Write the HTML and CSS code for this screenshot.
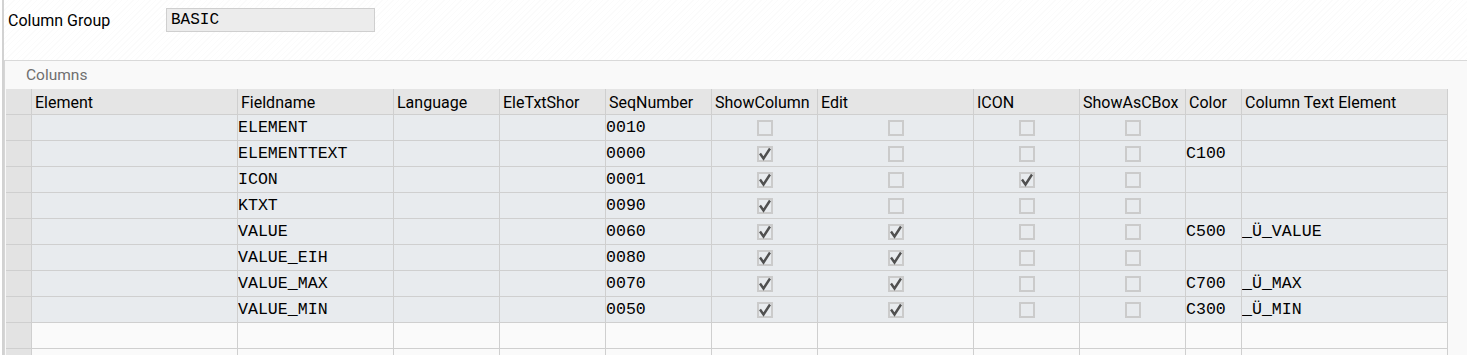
FILE: index.html
```html
<!DOCTYPE html>
<html lang="en">
<head>
  <meta charset="UTF-8">
  <title>Column Group</title>
  <link rel="stylesheet" href="styles.css">
</head>
<body>
  <div class="page">
    <div class="head">
      <label class="head-label">Column Group</label>
      <div class="field">BASIC</div>
    </div>

    <div class="panel">
      <div class="panel-title">Columns</div>
      <div class="grid">
        <!-- header -->
        <div class="sel"></div>
        <div class="hd">Element</div>
        <div class="hd">Fieldname</div>
        <div class="hd">Language</div>
        <div class="hd">EleTxtShor</div>
        <div class="hd">SeqNumber</div>
        <div class="hd">ShowColumn</div>
        <div class="hd">Edit</div>
        <div class="hd">ICON</div>
        <div class="hd">ShowAsCBox</div>
        <div class="hd">Color</div>
        <div class="hd">Column Text Element</div>

        <!-- ELEMENT -->
        <div class="sel"></div>
        <div class="c"></div>
        <div class="c">ELEMENT</div>
        <div class="c"></div>
        <div class="c"></div>
        <div class="c">0010</div>
        <div class="c ck"><span class="box"></span></div>
        <div class="c ck"><span class="box"></span></div>
        <div class="c ck"><span class="box"></span></div>
        <div class="c ck"><span class="box"></span></div>
        <div class="c"></div>
        <div class="c"></div>

        <!-- ELEMENTTEXT -->
        <div class="sel"></div>
        <div class="c"></div>
        <div class="c">ELEMENTTEXT</div>
        <div class="c"></div>
        <div class="c"></div>
        <div class="c">0000</div>
        <div class="c ck"><span class="box on"></span></div>
        <div class="c ck"><span class="box"></span></div>
        <div class="c ck"><span class="box"></span></div>
        <div class="c ck"><span class="box"></span></div>
        <div class="c">C100</div>
        <div class="c"></div>

        <!-- ICON -->
        <div class="sel"></div>
        <div class="c"></div>
        <div class="c">ICON</div>
        <div class="c"></div>
        <div class="c"></div>
        <div class="c">0001</div>
        <div class="c ck"><span class="box on"></span></div>
        <div class="c ck"><span class="box"></span></div>
        <div class="c ck"><span class="box on"></span></div>
        <div class="c ck"><span class="box"></span></div>
        <div class="c"></div>
        <div class="c"></div>

        <!-- KTXT -->
        <div class="sel"></div>
        <div class="c"></div>
        <div class="c">KTXT</div>
        <div class="c"></div>
        <div class="c"></div>
        <div class="c">0090</div>
        <div class="c ck"><span class="box on"></span></div>
        <div class="c ck"><span class="box"></span></div>
        <div class="c ck"><span class="box"></span></div>
        <div class="c ck"><span class="box"></span></div>
        <div class="c"></div>
        <div class="c"></div>

        <!-- VALUE -->
        <div class="sel"></div>
        <div class="c"></div>
        <div class="c">VALUE</div>
        <div class="c"></div>
        <div class="c"></div>
        <div class="c">0060</div>
        <div class="c ck"><span class="box on"></span></div>
        <div class="c ck"><span class="box on"></span></div>
        <div class="c ck"><span class="box"></span></div>
        <div class="c ck"><span class="box"></span></div>
        <div class="c">C500</div>
        <div class="c">_Ü_VALUE</div>

        <!-- VALUE_EIH -->
        <div class="sel"></div>
        <div class="c"></div>
        <div class="c">VALUE_EIH</div>
        <div class="c"></div>
        <div class="c"></div>
        <div class="c">0080</div>
        <div class="c ck"><span class="box on"></span></div>
        <div class="c ck"><span class="box on"></span></div>
        <div class="c ck"><span class="box"></span></div>
        <div class="c ck"><span class="box"></span></div>
        <div class="c"></div>
        <div class="c"></div>

        <!-- VALUE_MAX -->
        <div class="sel"></div>
        <div class="c"></div>
        <div class="c">VALUE_MAX</div>
        <div class="c"></div>
        <div class="c"></div>
        <div class="c">0070</div>
        <div class="c ck"><span class="box on"></span></div>
        <div class="c ck"><span class="box on"></span></div>
        <div class="c ck"><span class="box"></span></div>
        <div class="c ck"><span class="box"></span></div>
        <div class="c">C700</div>
        <div class="c">_Ü_MAX</div>

        <!-- VALUE_MIN -->
        <div class="sel"></div>
        <div class="c"></div>
        <div class="c">VALUE_MIN</div>
        <div class="c"></div>
        <div class="c"></div>
        <div class="c">0050</div>
        <div class="c ck"><span class="box on"></span></div>
        <div class="c ck"><span class="box on"></span></div>
        <div class="c ck"><span class="box"></span></div>
        <div class="c ck"><span class="box"></span></div>
        <div class="c">C300</div>
        <div class="c">_Ü_MIN</div>

        <!-- empty rows -->
        <div class="sel"></div>
        <div class="e"></div><div class="e"></div><div class="e"></div><div class="e"></div>
        <div class="e"></div><div class="e"></div><div class="e"></div><div class="e"></div>
        <div class="e"></div><div class="e"></div><div class="e"></div>

        <div class="sel"></div>
        <div class="e"></div><div class="e"></div><div class="e"></div><div class="e"></div>
        <div class="e"></div><div class="e"></div><div class="e"></div><div class="e"></div>
        <div class="e"></div><div class="e"></div><div class="e"></div>
      </div>
    </div>
  </div>
</body>
</html>
```

FILE: styles.css
```css
html, body {
  margin: 0;
  padding: 0;
  background: #fff;
  overflow: hidden;
}

body {
  font-family: Roboto, "Liberation Sans", sans-serif;
  font-size: 16px;
  color: #000;
}

.page {
  margin-left: 2px;
  border-left: 2px solid #d2d2d2;
  height: 100vh;
  box-sizing: border-box;
  overflow: hidden;
  background: repeating-linear-gradient(135deg, #fff 0 3px, #fbfbfb 3px 4px);
}

.head {
  display: flex;
  align-items: center;
  padding: 8px 0 0 4px;
  height: 24px;
}

.head-label {
  width: 158px;
  line-height: 24px;
  padding-top: 2px;
}

.field {
  width: 209px;
  height: 24px;
  box-sizing: border-box;
  background: #ececec;
  border: 1px solid #cfcfcf;
  padding-left: 4px;
  font-family: "Liberation Mono", monospace;
  font-size: 16px;
  line-height: 22px;
}

.panel {
  margin-top: 28px;
  border-top: 1px solid #d9d9d9;
  border-left: 1px solid #d6d6d6;
  padding-left: 1px;
  background: #f9f9f9;
}

.panel-title {
  height: 28px;
  line-height: 29px;
  padding-left: 20px;
  color: #6f6f6f;
  font-size: 15.5px;
}

.grid {
  display: grid;
  grid-template-columns: 26px 206px 156px 106px 106px 106px 106px 156px 106px 106px 56px 206px;
}

.grid > div {
  height: 26px;
  box-sizing: border-box;
  border-right: 1px solid #cfcfcf;
  border-bottom: 1px solid #cfcfcf;
  white-space: nowrap;
  overflow: hidden;
}

.sel {
  background: #e3e3e3;
}

.hd {
  background: #e5e5e5;
  padding-left: 3px;
  line-height: 25px;
  padding-top: 1px;
}

.c {
  background: #e8ebee;
  font-family: "Liberation Mono", monospace;
  font-size: 16.6px;
  line-height: 25px;
  padding-left: 0;
}

.e {
  background: #fafafa;
}

.ck {
  display: flex;
  justify-content: center;
  align-items: center;
}

.box {
  position: relative;
  width: 16px;
  height: 16px;
  box-sizing: border-box;
  border: 2px solid #cbcbcb;
}

.box.on::after {
  content: "";
  position: absolute;
  left: -2px;
  top: -2px;
  width: 16px;
  height: 16px;
  background: url("data:image/svg+xml,%3Csvg xmlns='http://www.w3.org/2000/svg' viewBox='0 0 16 16'%3E%3Cpath d='M3 7.5 L6.5 12.5 L13 2.5' fill='none' stroke='%23505050' stroke-width='2.4'/%3E%3C/svg%3E") center / 16px 16px no-repeat;
}
```
